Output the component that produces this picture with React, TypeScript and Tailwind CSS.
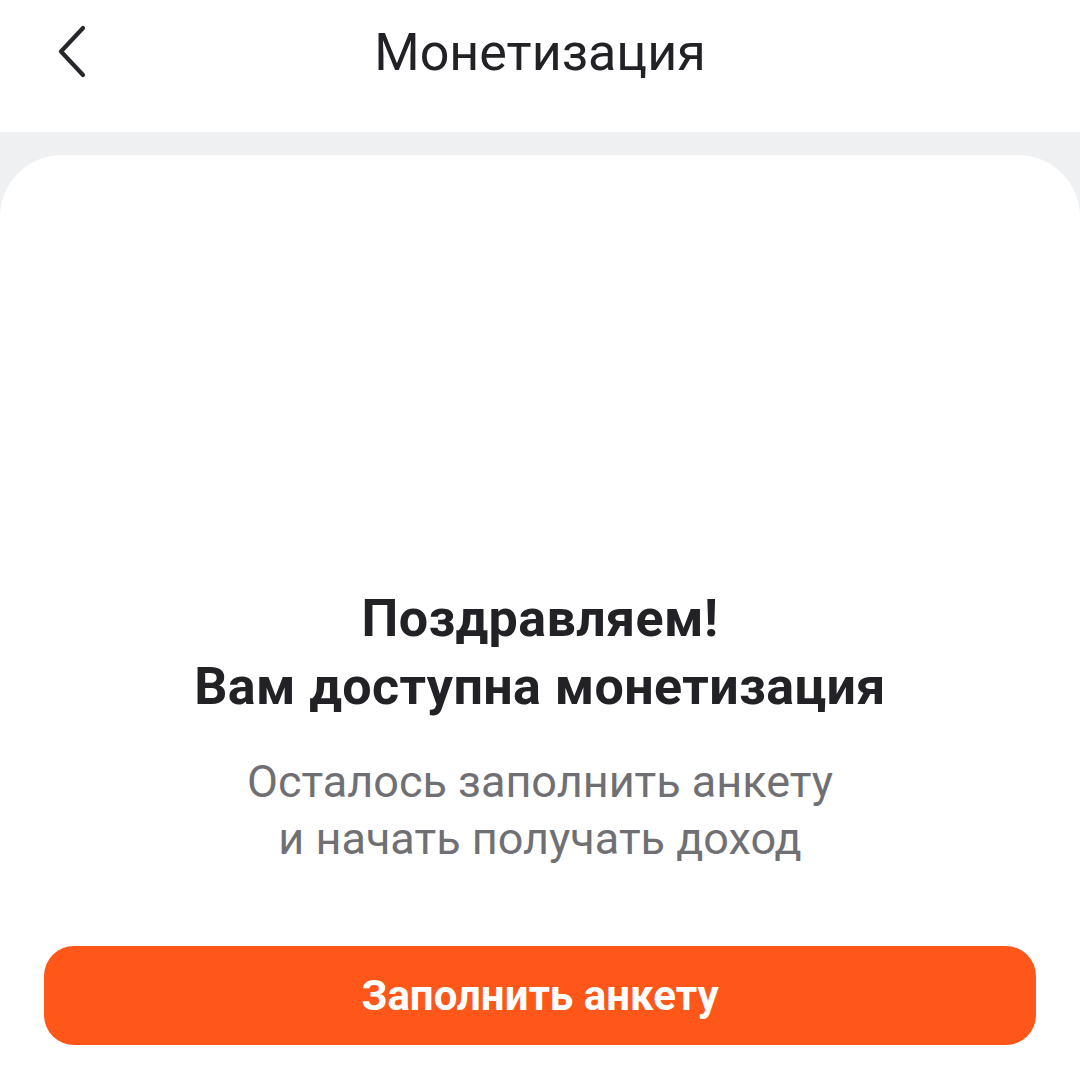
export default function App() {
  const font = { fontFamily: 'Roboto, "Noto Sans", sans-serif' };
  return (
    <div className="w-[1080px] h-[1079px] flex flex-col bg-[#eff0f2] overflow-hidden" style={font}>
      <div className="h-[132px] shrink-0 bg-white relative flex items-center justify-center">
        <svg className="absolute left-[52px] top-[22px]" width="44" height="60" viewBox="0 0 44 60" fill="none">
          <path d="M31 6 L9 29.5 L31 53" stroke="#26262b" strokeWidth="4.2" strokeLinecap="round" strokeLinejoin="round" />
        </svg>
        <span className="text-[52px] text-[#222226] leading-none -mt-[26px]">Монетизация</span>
      </div>
      <div className="mt-[23px] flex-1 bg-white rounded-t-[62px] flex flex-col items-center">
        <div className="mt-[430px] text-center font-bold text-[52px] tracking-[0.4px] leading-[68px] text-[#222226]">
          <div>Поздравляем!</div>
          <div>Вам доступна монетизация</div>
        </div>
        <div className="mt-[32px] text-center text-[45px] leading-[57px] text-[#707074]">
          <div>Осталось заполнить анкету</div>
          <div>и начать получать доход</div>
        </div>
        <button className="mt-[79px] w-[992px] h-[99px] rounded-[30px] bg-[#ff5719] text-white font-bold text-[42px] flex items-center justify-center">
          Заполнить анкету
        </button>
      </div>
    </div>
  );
}
